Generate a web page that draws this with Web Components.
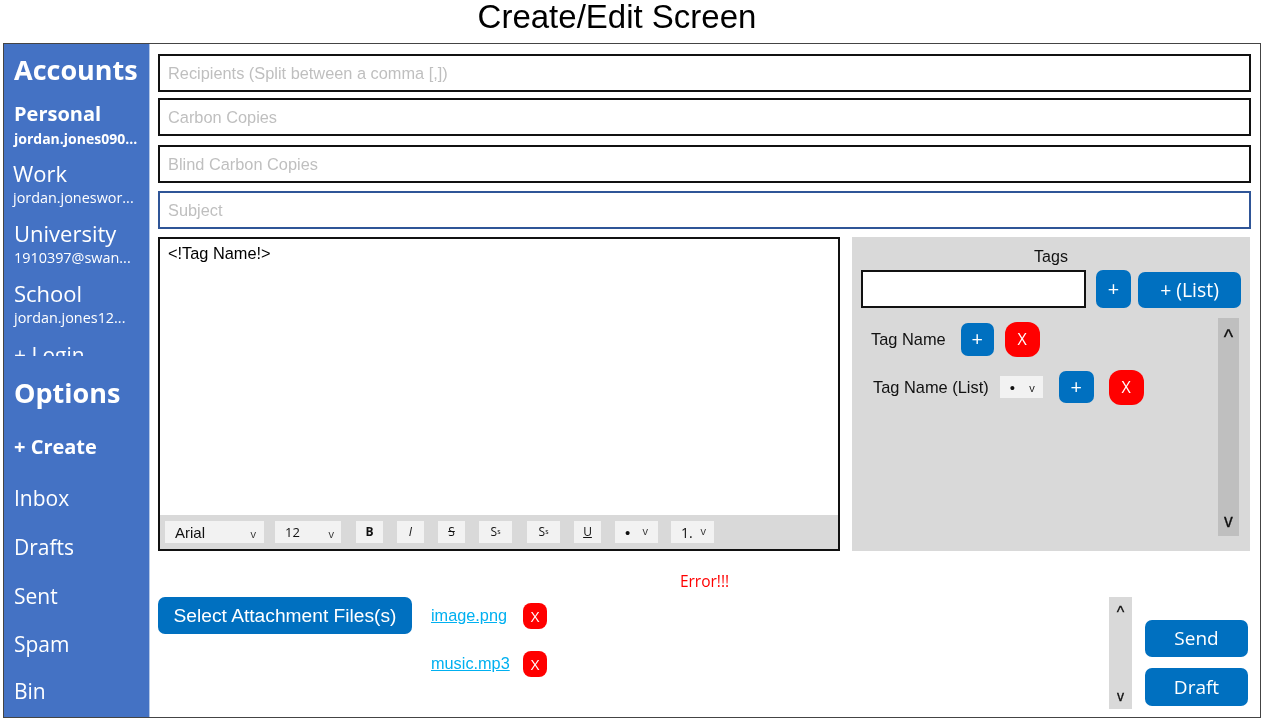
<!DOCTYPE html>
<html lang="en">
<head>
<meta charset="utf-8">
<title>Create/Edit Screen</title>
<style>
  html, body { margin: 0; height: 100%; background: #fff; }
  body { font-family: "Liberation Sans", Arial, sans-serif; overflow: hidden; }
</style>
</head>
<body>
<app-screen title-text="Create/Edit Screen">
  <side-bar slot="side">
    <side-heading>Accounts</side-heading>
    <account-list>
      <account-item name="Personal" mail="jordan.jones090..." active style="height:60px"></account-item>
      <account-item name="Work" mail="jordan.joneswor..." style="height:60px;margin-left:-1px"></account-item>
      <account-item name="University" mail="1910397@swan..." style="height:60px"></account-item>
      <account-item name="School" mail="jordan.jones12..." style="height:60px"></account-item>
      <side-link>+ Login</side-link>
    </account-list>
    <side-heading style="margin-top:19px">Options</side-heading>
    <side-link strong style="margin-top:20px">+ Create</side-link>
    <side-link style="margin-top:19px">Inbox</side-link>
    <side-link style="margin-top:17px">Drafts</side-link>
    <side-link style="margin-top:17px">Sent</side-link>
    <side-link style="margin-top:16px">Spam</side-link>
    <side-link style="margin-top:15px">Bin</side-link>
  </side-bar>

  <text-field>Recipients (Split between a comma [,])</text-field>
  <text-field style="margin-top:6px">Carbon Copies</text-field>
  <text-field style="margin-top:9px">Blind Carbon Copies</text-field>
  <text-field focused style="margin-top:8px">Subject</text-field>

  <div style="display:flex;gap:12px;margin-top:8px;height:314px">
    <rich-editor>
      &lt;!Tag Name!&gt;
      <tool-btn slot="tools" wide="99" style="margin-left:0;--caret-pad:8px" label="Arial" caret="v" sans></tool-btn>
      <tool-btn slot="tools" wide="66" style="margin-left:11px;--caret-pad:7px" label="12" caret="v"></tool-btn>
      <tool-btn slot="tools" wide="27" style="margin-left:15px"><b>B</b></tool-btn>
      <tool-btn slot="tools" wide="27" style="margin-left:14px"><i>I</i></tool-btn>
      <tool-btn slot="tools" wide="27" style="margin-left:14px"><s>S</s></tool-btn>
      <tool-btn slot="tools" wide="33" style="margin-left:14px">S<sub>s</sub></tool-btn>
      <tool-btn slot="tools" wide="33" style="margin-left:15px">S<sup>s</sup></tool-btn>
      <tool-btn slot="tools" wide="27" style="margin-left:14px"><u>U</u></tool-btn>
      <tool-btn slot="tools" wide="43" style="margin-left:14px;--caret-pad:10px" label="•" caret="v" high></tool-btn>
      <tool-btn slot="tools" wide="43" style="margin-left:13px;--caret-pad:8px" label="1." caret="v" high></tool-btn>
    </rich-editor>

    <tags-panel>
      <tag-row slot="rows" label="Tag Name" style="margin-left:10px;margin-top:3px;height:36px" gap1="21"></tag-row>
      <tag-row slot="rows" label="Tag Name (List)" list style="margin-left:12px;margin-top:12px;height:36px" gap1="11"></tag-row>
    </tags-panel>
  </div>

  <div style="margin-top:20px;height:20px;text-align:center;color:#f00;font:15.5px/20px 'Open Sans',sans-serif">Error!!!</div>

  <div style="display:flex;align-items:flex-start;margin-top:6px">
    <ui-btn w="254" h="37" size="19.2" sans>Select Attachment Files(s)</ui-btn>
    <div style="display:flex;flex-direction:column;gap:22px;margin-left:19px;margin-top:6px">
      <attach-row>image.png</attach-row>
      <attach-row>music.mp3</attach-row>
    </div>
    <scroll-strip style="margin-left:auto;width:23px;height:112px;background:#d9d9d9;padding:6px 0 3px" size="16"></scroll-strip>
    <div style="display:flex;flex-direction:column;gap:11px;margin:23px 3px 0 13px">
      <ui-btn w="103" h="37" size="19">Send</ui-btn>
      <ui-btn w="103" h="38" size="19">Draft</ui-btn>
    </div>
  </div>
</app-screen>

<script>
// shared bits
const sideFont = '"Open Sans", "Noto Sans", sans-serif'

class AppScreen extends HTMLElement {
  connectedCallback() {
    if (this.shadowRoot) return
    this.attachShadow({ mode: 'open' }).innerHTML = `
      <style>
        :host { display: flex; flex-direction: column; height: 720px; filter: blur(0.35px); }
        h1 { margin: 0; height: 43px; text-align: center; font: 400 33px/33px "Liberation Sans", sans-serif; color: #000; padding-right: 34px; box-sizing: border-box; }
        .frame { display: flex; width: 1258px; height: 675px; margin-left: 3px; border: 1px solid #444; box-sizing: border-box; }
        main { flex: 1; min-width: 0; padding: 10px 9px 0 8px; box-sizing: border-box; }
      </style>
      <h1>${this.getAttribute('title-text')}</h1>
      <div class="frame">
        <slot name="side"></slot>
        <main><slot></slot></main>
      </div>`
  }
}

class SideBar extends HTMLElement {
  constructor() {
    super()
    this.attachShadow({ mode: 'open' }).innerHTML = `
      <style>
        :host { display: block; width: 146px; flex: none; background: #4472c4; color: #fff; font-family: ${sideFont}; overflow: hidden; padding-top: 8px; box-sizing: border-box; border-right: 1px solid #b4c7e7; }
      </style>
      <slot></slot>`
  }
}

class SideHeading extends HTMLElement {
  constructor() {
    super()
    this.attachShadow({ mode: 'open' }).innerHTML = `
      <style>
        :host { display: block; padding-left: 10px; height: 36px; font: 700 27px/36px ${sideFont}; white-space: nowrap; }
      </style>
      <slot></slot>`
  }
}

class AccountList extends HTMLElement {
  constructor() {
    super()
    this.attachShadow({ mode: 'open' }).innerHTML = `
      <style>
        :host { display: block; height: 268px; padding-top: 11px; box-sizing: border-box; overflow: hidden; }
      </style>
      <slot></slot>`
  }
}

class AccountItem extends HTMLElement {
  connectedCallback() {
    if (this.shadowRoot) return
    const on = this.hasAttribute('active')
    this.attachShadow({ mode: 'open' }).innerHTML = `
      <style>
        :host { display: block; padding-left: 10px; box-sizing: border-box; white-space: nowrap; }
        .n { font: ${on ? 700 : 400} ${on ? 20 : 22}px/28px ${sideFont}; position: relative; top: ${on ? 1 : 0}px; }
        .m { font: ${on ? 700 : 400} ${on ? 14 : 14.4}px/20px ${sideFont}; margin-top: ${on ? 2 : 1}px; }
      </style>
      <div class="n">${this.getAttribute('name')}</div>
      <div class="m">${this.getAttribute('mail')}</div>`
  }
}

class SideLink extends HTMLElement {
  connectedCallback() {
    if (this.shadowRoot) return
    const strong = this.hasAttribute('strong')
    this.attachShadow({ mode: 'open' }).innerHTML = `
      <style>
        :host { display: block; padding-left: 10px; height: 32px; font: ${strong ? 700 : 400} ${strong ? 20 : 21}px/32px ${sideFont}; white-space: nowrap; }
      </style>
      <slot></slot>`
  }
}

class TextField extends HTMLElement {
  constructor() {
    super()
    this.attachShadow({ mode: 'open' }).innerHTML = `
      <style>
        :host { display: block; height: 38px; box-sizing: border-box; border: 2px solid #111; background: #fff; color: #bfbfbf; font: 16.35px/34px "Liberation Sans", sans-serif; padding-left: 8px; }
        :host([focused]) { border-color: #2f5597; }
      </style>
      <slot></slot>`
  }
}

class RichEditor extends HTMLElement {
  constructor() {
    super()
    this.attachShadow({ mode: 'open' }).innerHTML = `
      <style>
        :host { display: flex; flex-direction: column; width: 682px; flex: none; box-sizing: border-box; border: 2px solid #111; background: #fff; }
        .body { flex: 1; padding: 4px 8px; font: 16.35px/20px "Liberation Sans", sans-serif; color: #000; }
        .tools { display: flex; align-items: center; height: 34px; background: #d9d9d9; padding-left: 5px; box-sizing: border-box; }
      </style>
      <div class="body"><slot></slot></div>
      <div class="tools"><slot name="tools"></slot></div>`
  }
}

class ToolBtn extends HTMLElement {
  connectedCallback() {
    if (this.shadowRoot) return
    const label = this.getAttribute('label')
    const caret = this.getAttribute('caret')
    let labelFont = this.hasAttribute('sans') ? '15px "Liberation Sans", sans-serif' : '13px ' + sideFont
    if (label == '•') labelFont = '15px "Liberation Sans", sans-serif'
    if (label == '1.') labelFont = '14px ' + sideFont
    this.attachShadow({ mode: 'open' }).innerHTML = `
      <style>
        :host { display: flex; align-items: center; justify-content: center; flex: none; width: ${this.getAttribute('wide')}px; height: 22px; box-sizing: border-box; background: #f2f2f2; color: #111; font: 12px/22px ${sideFont}; }
        :host([label]) { justify-content: space-between; padding: 0 var(--caret-pad, 6px) 0 10px; }
        .l { font: ${labelFont}; }
        .c { font: 11px/1 ${sideFont}; color: #333; position: relative; top: 1px; }
        :host([high]) .c { top: -2px; }
        ::slotted(sub), ::slotted(sup) { font-size: 7px; }
      </style>
      ${label ? `<span class="l">${label}</span><span class="c">${caret}</span>` : '<slot></slot>'}`
  }
}

class UiBtn extends HTMLElement {
  connectedCallback() {
    if (this.shadowRoot) return
    const family = this.hasAttribute('sans') ? '"Liberation Sans", sans-serif' : sideFont
    const red = this.hasAttribute('red')
    this.attachShadow({ mode: 'open' }).innerHTML = `
      <style>
        :host { display: flex; align-items: center; justify-content: center; flex: none; box-sizing: border-box; width: ${this.getAttribute('w')}px; height: ${this.getAttribute('h')}px; border-radius: ${this.getAttribute('r') || 7}px; background: ${red ? '#f00' : '#0070c0'}; color: #fff; font: ${this.getAttribute('size') || 20}px/1 ${family}; white-space: nowrap; }
      </style>
      <slot></slot>`
  }
}

class ScrollStrip extends HTMLElement {
  connectedCallback() {
    if (this.shadowRoot) return
    const size = +this.getAttribute('size')
    this.attachShadow({ mode: 'open' }).innerHTML = `
      <style>
        :host { display: flex; flex-direction: column; justify-content: space-between; align-items: center; flex: none; box-sizing: border-box; color: #111; font: ${size}px/20px "Liberation Sans", sans-serif; -webkit-text-stroke: 0.3px #111; }
        .d { font-size: ${size * 0.88}px; }
      </style>
      <span>^</span><span class="d">v</span>`
  }
}

class TagsPanel extends HTMLElement {
  constructor() {
    super()
    this.attachShadow({ mode: 'open' }).innerHTML = `
      <style>
        :host { display: block; width: 398px; flex: none; box-sizing: border-box; background: #d9d9d9; padding: 10px 9px 0; }
        .t { text-align: center; font: 16px/20px "Liberation Sans", sans-serif; color: #111; height: 23px; }
        .add { display: flex; align-items: flex-start; }
        .in { width: 225px; height: 38px; box-sizing: border-box; border: 2px solid #111; background: #fff; }
        .list { display: flex; margin-top: 10px; }
        .rows { flex: 1; min-width: 0; }
        scroll-strip { width: 21px; height: 218px; background: #bfbfbf; margin-right: 2px; padding: 9px 0 5px; }
      </style>
      <div class="t">Tags</div>
      <div class="add">
        <div class="in"></div>
        <ui-btn w="35" h="38" size="20" style="margin-left:10px">+</ui-btn>
        <ui-btn w="103" h="36" size="19.4" style="margin-left:7px;margin-top:2px">+ (List)</ui-btn>
      </div>
      <div class="list">
        <div class="rows"><slot name="rows"></slot></div>
        <scroll-strip size="20"></scroll-strip>
      </div>`
  }
}

class TagRow extends HTMLElement {
  connectedCallback() {
    if (this.shadowRoot) return
    const list = this.hasAttribute('list')
    this.attachShadow({ mode: 'open' }).innerHTML = `
      <style>
        :host { display: flex; align-items: center; font: 16.4px/20px "Liberation Sans", sans-serif; color: #111; white-space: nowrap; }
        .sel { display: flex; align-items: center; justify-content: space-between; width: 43px; height: 22px; box-sizing: border-box; padding: 0 8px 0 10px; background: #f2f2f2; margin-left: ${this.getAttribute('gap1')}px; font: 11px/1 ${sideFont}; }
        .b { font: 15px/1 "Liberation Sans", sans-serif; }
      </style>
      <span>${this.getAttribute('label')}</span>
      ${list ? `<span class="sel"><span class="b">•</span><span>v</span></span>` : ''}
      <ui-btn w="${list ? 35 : 33}" h="${list ? 32 : 33}" size="20" style="margin-left:${list ? 16 : 15}px">+</ui-btn>
      <ui-btn red w="35" h="35" r="12" size="16" style="margin-left:${list ? 15 : 11}px">X</ui-btn>`
  }
}

class AttachRow extends HTMLElement {
  constructor() {
    super()
    this.attachShadow({ mode: 'open' }).innerHTML = `
      <style>
        :host { display: flex; align-items: center; height: 26px; }
        a { width: 92px; color: #00b0f0; text-decoration: underline; font: 16.3px/18px "Liberation Sans", sans-serif; white-space: nowrap; margin-top: -2px; }
      </style>
      <a><slot></slot></a>
      <ui-btn red w="24" h="26" r="8" size="15">X</ui-btn>`
  }
}

customElements.define('app-screen', AppScreen)
customElements.define('side-bar', SideBar)
customElements.define('side-heading', SideHeading)
customElements.define('account-list', AccountList)
customElements.define('account-item', AccountItem)
customElements.define('side-link', SideLink)
customElements.define('text-field', TextField)
customElements.define('rich-editor', RichEditor)
customElements.define('tool-btn', ToolBtn)
customElements.define('ui-btn', UiBtn)
customElements.define('scroll-strip', ScrollStrip)
customElements.define('tags-panel', TagsPanel)
customElements.define('tag-row', TagRow)
customElements.define('attach-row', AttachRow)
</script>
</body>
</html>
